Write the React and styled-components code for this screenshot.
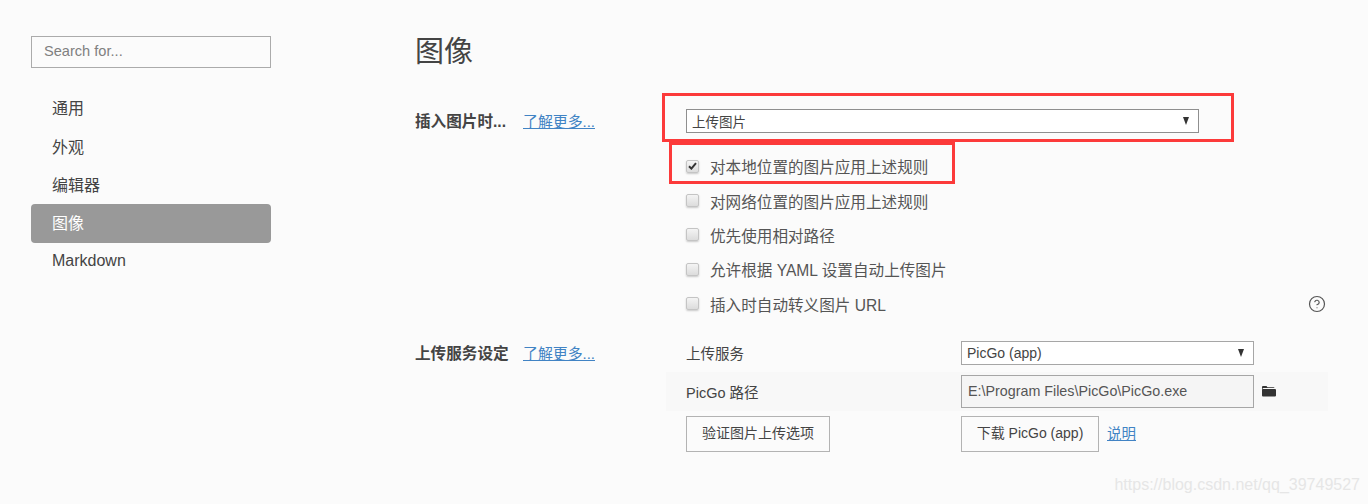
import * as React from "react";
import styled, { createGlobalStyle } from "styled-components";
import { CircleHelp } from "lucide-react";

const font = `"Liberation Sans", "Noto Sans CJK SC", sans-serif`;

const GlobalStyle = createGlobalStyle`
  html, body {
    margin: 0;
    padding: 0;
    background: #fbfbfb;
  }
  * {
    box-sizing: border-box;
  }
`;

const Page = styled.div`
  position: relative;
  display: flex;
  width: 1368px;
  height: 504px;
  overflow: hidden;
  background: #fbfbfb;
  color: #444;
  font-family: ${font};
  font-size: 15.6px;
`;

// Sidebar
const Sidebar = styled.aside`
  width: 240px;
  margin-left: 31px;
  padding-top: 36px;
`;

const Search = styled.input`
  display: block;
  width: 100%;
  height: 32px;
  margin-bottom: 21px;
  padding: 0 12px 2px;
  border: 1px solid #ababab;
  border-radius: 0;
  background: #fbfbfb;
  font-family: ${font};
  font-size: 14.6px;
  outline: none;

  &::placeholder {
    color: #808080;
    opacity: 1;
  }
`;

const MenuItem = styled.div`
  display: flex;
  align-items: center;
  height: ${(p) => (p.$active ? "39px" : "38.4px")};
  padding: 0 0 ${(p) => (p.$active ? 3 : 2)}px 21px;
  border-radius: 4px;
  background: ${(p) => (p.$active ? "#999" : "transparent")};
  color: ${(p) => (p.$active ? "#fff" : "#444")};
  font-size: 16px;
`;

// Main
const Main = styled.main`
  width: 913px;
  margin-left: 144px;
  padding-top: 31px;
`;

const Title = styled.h1`
  margin: 0 0 21px;
  height: 43px;
  font-size: 29px;
  font-weight: 400;
  line-height: 43px;
  color: #444;
`;

const Section = styled.section`
  display: flex;
  margin-bottom: ${(p) => p.$gap || 0}px;
`;

const SectionHead = styled.div`
  display: flex;
  align-items: baseline;
  width: 251px;
  padding-top: ${(p) => p.$top}px;
  line-height: 22px;
`;

const SectionName = styled.strong`
  width: 108px;
  font-weight: 700;
  font-size: 15.6px;
  color: #444;
`;

const Link = styled.a`
  color: #4183c4;
  font-size: 14.9px;
  text-decoration: underline;
`;

const SectionBody = styled.div`
  width: 662px;
`;

const Select = styled.div`
  display: flex;
  align-items: center;
  justify-content: space-between;
  width: ${(p) => p.$width}px;
  height: 24px;
  padding: 0 9px 0 5px;
  border: 1px solid ${(p) => p.$border || "#a6a6a6"};
  background: #fff;
  font-size: ${(p) => p.$size || 14}px;
  color: #444;
`;

const Arrow = styled.span`
  width: 0;
  height: 0;
  border-left: 3.5px solid transparent;
  border-right: 3.5px solid transparent;
  border-top: 8px solid #333;
`;

const SelectWrap = styled.div`
  padding: 14px 0 0 20px;
  margin-bottom: 16px;
`;

const CheckRow = styled.div`
  display: flex;
  align-items: center;
  height: 34.4px;
  padding: 0 2px 0 20px;
  color: #555;
`;

const Check = styled.span`
  display: flex;
  align-items: center;
  justify-content: center;
  width: 13px;
  height: 13px;
  margin-right: 11px;
  border: 1px solid #c4c4c4;
  border-radius: 2px;
  background: linear-gradient(#f4f4f4, #dcdcdc);
  box-shadow: 0 1px 2px rgba(0, 0, 0, 0.2);
`;

const HelpIcon = styled(CircleHelp)`
  margin-left: auto;
  color: #555;
`;

const ServiceRow = styled.div`
  display: grid;
  grid-template-columns: 275px 1fr;
  align-items: center;
  height: ${(p) => p.$height}px;
  padding: 0 0 ${(p) => p.$bottom || 0}px 20px;
  background: ${(p) => (p.$shaded ? "#f8f8f8" : "transparent")};
  font-size: 14.5px;
`;

const FieldGroup = styled.div`
  display: flex;
  align-items: center;
`;

const PathInput = styled.input`
  width: 293px;
  height: 33px;
  padding: 0 6px;
  border: 1px solid #a6a6a6;
  border-radius: 0;
  background: #f5f5f5;
  color: #555;
  font-family: ${font};
  font-size: 14.3px;
  outline: none;
`;

const FolderIcon = styled.svg`
  margin-left: 8px;
  color: #333;
`;

const Button = styled.button`
  height: 36px;
  width: ${(p) => p.$width}px;
  padding: 0 0 3px;
  border: 1px solid #b3b3b3;
  border-radius: 0;
  background: #fbfbfb;
  color: #444;
  font-family: ${font};
  font-size: 14px;
`;

const HelpLink = styled(Link)`
  margin: 0 0 3px 8px;
  font-size: 14.5px;
`;

// Red marks drawn over the screenshot
const Annotation = styled.div`
  position: absolute;
  left: ${(p) => p.$left}px;
  top: ${(p) => p.$top}px;
  width: ${(p) => p.$width}px;
  height: ${(p) => p.$height}px;
  border: 3px solid #fc3a3a;
`;

const Watermark = styled.div`
  position: absolute;
  right: 8px;
  top: 474px;
  color: #e6e6e6;
  font-size: 16px;
  line-height: 22px;
`;

const menu = ["通用", "外观", "编辑器", "图像", "Markdown"];

const checks = [
  "对本地位置的图片应用上述规则",
  "对网络位置的图片应用上述规则",
  "优先使用相对路径",
  "允许根据 YAML 设置自动上传图片",
  "插入时自动转义图片 URL",
];

const App = () => {
  return (
    <Page>
      <GlobalStyle />
      <Sidebar>
        <Search placeholder="Search for..." />
        {menu.map((item) => (
          <MenuItem key={item} $active={item === "图像"}>
            {item}
          </MenuItem>
        ))}
      </Sidebar>
      <Main>
        <Title>图像</Title>
        <Section $gap={15}>
          <SectionHead $top={16}>
            <SectionName>插入图片时...</SectionName>
            <Link>了解更多...</Link>
          </SectionHead>
          <SectionBody>
            <SelectWrap>
              <Select $width={513} $border="#8f8f8f" $size={13.5}>
                上传图片
                <Arrow />
              </Select>
            </SelectWrap>
            {checks.map((text, i) => (
              <CheckRow key={text}>
                <Check>
                  {i === 0 && (
                    <svg width="9" height="8" viewBox="0 0 9 8">
                      <path d="M1 4.2 L3.4 6.6 L8 1.2" fill="none" stroke="#333" strokeWidth="2" />
                    </svg>
                  )}
                </Check>
                {text}
                {i === 4 && <HelpIcon size={18} strokeWidth={1.6} />}
              </CheckRow>
            ))}
          </SectionBody>
        </Section>
        <Section>
          <SectionHead $top={7}>
            <SectionName>上传服务设定</SectionName>
            <Link>了解更多...</Link>
          </SectionHead>
          <SectionBody>
            <ServiceRow $height={36} $bottom={2}>
              上传服务
              <Select $width={293}>
                PicGo (app)
                <Arrow />
              </Select>
            </ServiceRow>
            <ServiceRow $height={39} $shaded>
              PicGo 路径
              <FieldGroup>
                <PathInput readOnly value="E:\Program Files\PicGo\PicGo.exe" />
                <FolderIcon width="14" height="12" viewBox="0 0 14 12">
                  <path
                    d="M0 2 Q0 1 1 1 L4.5 1 L5.5 2.2 L11.5 2.2 Q12.5 2.2 12.5 3 L1.5 3 Q0.5 3 0.5 4 L0 4.5 Z M1 4 L13 4 Q14 4 14 5 L14 10.5 Q14 11.5 13 11.5 L1 11.5 Q0 11.5 0 10.5 L0 5 Q0 4 1 4 Z"
                    fill="currentColor"
                  />
                </FolderIcon>
              </FieldGroup>
            </ServiceRow>
            <ServiceRow $height={46}>
              <div>
                <Button $width={144}>验证图片上传选项</Button>
              </div>
              <FieldGroup>
                <Button $width={138}>下载 PicGo (app)</Button>
                <HelpLink>说明</HelpLink>
              </FieldGroup>
            </ServiceRow>
          </SectionBody>
        </Section>
      </Main>
      <Annotation $left={662} $top={93} $width={572} $height={49} />
      <Annotation $left={669} $top={142} $width={286} $height={42} />
      <Watermark>https://blog.csdn.net/qq_39749527</Watermark>
    </Page>
  );
};

export default App;
